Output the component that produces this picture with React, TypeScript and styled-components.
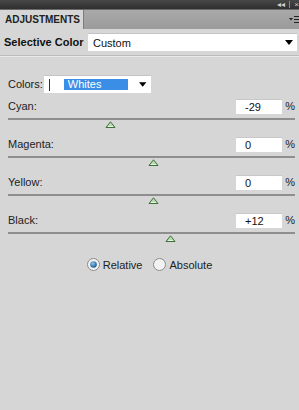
import React from "react";
import styled, { createGlobalStyle } from "styled-components";

const GlobalStyle = createGlobalStyle`
  html, body {
    margin: 0;
    padding: 0;
    background: #d6d6d6;
  }
  body {
    font-family: "Liberation Sans", Arial, sans-serif;
    font-size: 11px;
    color: #1a1a1a;
  }
`;

const Panel = styled.div`
  width: 299px;
  height: 410px;
  display: flex;
  flex-direction: column;
  background: #d6d6d6;
  overflow: hidden;
`;

const TitleBar = styled.div`
  height: 9px;
  background: linear-gradient(#474747, #2f2f2f);
  display: flex;
  align-items: center;
  justify-content: flex-end;
  gap: 4px;
  color: #d0d0d0;
  font-size: 8px;
  line-height: 9px;
`;

const Sep = styled.span`
  width: 1px;
  height: 7px;
  background: #8a8a8a;
`;

const TabBar = styled.div`
  height: 19px;
  display: flex;
  align-items: stretch;
  background: linear-gradient(#a9a9a9, #9b9b9b);
  border-top: 1px solid #6a6a6a;
`;

const Tab = styled.div`
  width: 84px;
  background: #d6d6d6;
  font-weight: bold;
  font-size: 10px;
  color: #222;
  display: flex;
  align-items: center;
  padding-left: 5px;
  box-sizing: border-box;
  border-right: 1px solid #7c7c7c;
`;

const TabFill = styled.div`
  flex: 1;
  display: flex;
  align-items: center;
  justify-content: flex-end;
`;

const Header = styled.div`
  height: 26px;
  display: flex;
  align-items: center;
  padding: 0 2px 0 4px;
  border-bottom: 1px solid #bcbcbc;
  margin-bottom: 1px;
  box-shadow: 0 1px 0 #e8e8e8;
`;

const HeaderTitle = styled.div`
  width: 84px;
  font-weight: bold;
  font-size: 11px;
  color: #111;
`;

const Select = styled.div<{ $w: number }>`
  width: ${(p) => p.$w}px;
  height: 18px;
  background: #fff;
  display: flex;
  align-items: center;
  box-sizing: border-box;
  padding: 0 4px 0 5px;
  border-top: 1px solid #c4c4c4;
`;

const SelectText = styled.span`
  flex: 1;
  color: #111;
`;

const Body = styled.div`
  padding: 18px 4px 0 8px;
  display: flex;
  flex-direction: column;
`;

const ColorsRow = styled.div`
  display: flex;
  align-items: center;
  gap: 1px;
  margin-bottom: 5px;
`;

const Caret = styled.span`
  width: 1px;
  height: 12px;
  background: #333;
  margin-right: 14px;
`;

const Highlight = styled.span`
  width: 70px;
  height: 11px;
  line-height: 11px;
  background: #3b8ee6;
  color: #fff;
  padding-left: 4px;
  box-sizing: border-box;
  margin-right: 11px;
`;

const Section = styled.div`
  display: flex;
  flex-direction: column;
  height: 38px;
`;

const LabelRow = styled.div`
  display: flex;
  align-items: center;
  height: 16px;
`;

const Label = styled.span`
  flex: 1;
  color: #222;
`;

const ValueBox = styled.div`
  width: 46px;
  height: 15px;
  background: #fff;
  box-sizing: border-box;
  padding-left: 9px;
  line-height: 15px;
  color: #111;
  border-top: 1px solid #c8c8c8;
`;

const Pct = styled.span`
  width: 13px;
  text-align: right;
  color: #222;
`;

const Track = styled.div`
  position: relative;
  margin-top: 4px;
  height: 2px;
  width: 287px;
  background: #8e8e8e;
`;

const Thumb = styled.svg<{ $x: number }>`
  position: absolute;
  top: 3px;
  left: ${(p) => p.$x}px;
`;

const RadioRow = styled.div`
  display: flex;
  justify-content: center;
  gap: 11px;
  margin-top: 8px;
  padding-right: 4px;
`;

const RadioItem = styled.label`
  display: flex;
  align-items: center;
  gap: 3px;
  color: #222;
`;

const sliders = [
  { label: "Cyan:", value: "-29", thumb: 97 },
  { label: "Magenta:", value: "0", thumb: 140 },
  { label: "Yellow:", value: "0", thumb: 140 },
  { label: "Black:", value: "+12", thumb: 157 },
];

function DownArrow() {
  return (
    <svg width="8" height="5" viewBox="0 0 8 5">
      <path d="M0 0H8L4 5Z" fill="#000" />
    </svg>
  );
}

function ThumbIcon({ x }: { x: number }) {
  return (
    <Thumb $x={x} width="11" height="7" viewBox="0 0 11 7">
      <path d="M1 6.5L5.5 0.8L10 6.5Z" fill="#b9dbb3" stroke="#3f6f3a" strokeWidth="1" strokeLinejoin="round" />
      <path d="M3 5.5H8" stroke="#e4f3e1" strokeWidth="1" />
    </Thumb>
  );
}

function Radio({ on }: { on: boolean }) {
  return (
    <svg width="13" height="13" viewBox="0 0 13 13">
      <defs>
        <radialGradient id="rg" cx="0.4" cy="0.35" r="0.7">
          <stop offset="0" stopColor="#8fc7ef" />
          <stop offset="1" stopColor="#0f4f86" />
        </radialGradient>
      </defs>
      <circle cx="6.5" cy="6.5" r="6" fill="#f2f2f2" stroke="#8b8b8b" />
      {on && <circle cx="6.5" cy="6.5" r="3.3" fill="url(#rg)" />}
    </svg>
  );
}

function App() {
  return (
    <Panel>
      <GlobalStyle />
      <TitleBar>
        <span>◂◂</span>
        <Sep />
        <span>×</span>
      </TitleBar>
      <TabBar>
        <Tab>ADJUSTMENTS</Tab>
        <TabFill>
          <svg width="10" height="9" viewBox="0 0 10 9">
            <path d="M0 3H4L2 5.5Z" fill="#222" />
            <path d="M5 1.5H10M5 4.5H10M5 7.5H10" stroke="#222" strokeWidth="1" />
          </svg>
        </TabFill>
      </TabBar>
      <Header>
        <HeaderTitle>Selective Color</HeaderTitle>
        <Select $w={209}>
          <SelectText>Custom</SelectText>
          <DownArrow />
        </Select>
      </Header>
      <Body>
        <ColorsRow>
          <span>Colors:</span>
          <Select $w={107}>
            <Caret />
            <Highlight>Whites</Highlight>
            <DownArrow />
          </Select>
        </ColorsRow>
        {sliders.map((s) => (
          <Section key={s.label}>
            <LabelRow>
              <Label>{s.label}</Label>
              <ValueBox>{s.value}</ValueBox>
              <Pct>%</Pct>
            </LabelRow>
            <Track>
              <ThumbIcon x={s.thumb} />
            </Track>
          </Section>
        ))}
        <RadioRow>
          <RadioItem>
            <Radio on={true} />
            Relative
          </RadioItem>
          <RadioItem>
            <Radio on={false} />
            Absolute
          </RadioItem>
        </RadioRow>
      </Body>
    </Panel>
  );
}

export default App;
